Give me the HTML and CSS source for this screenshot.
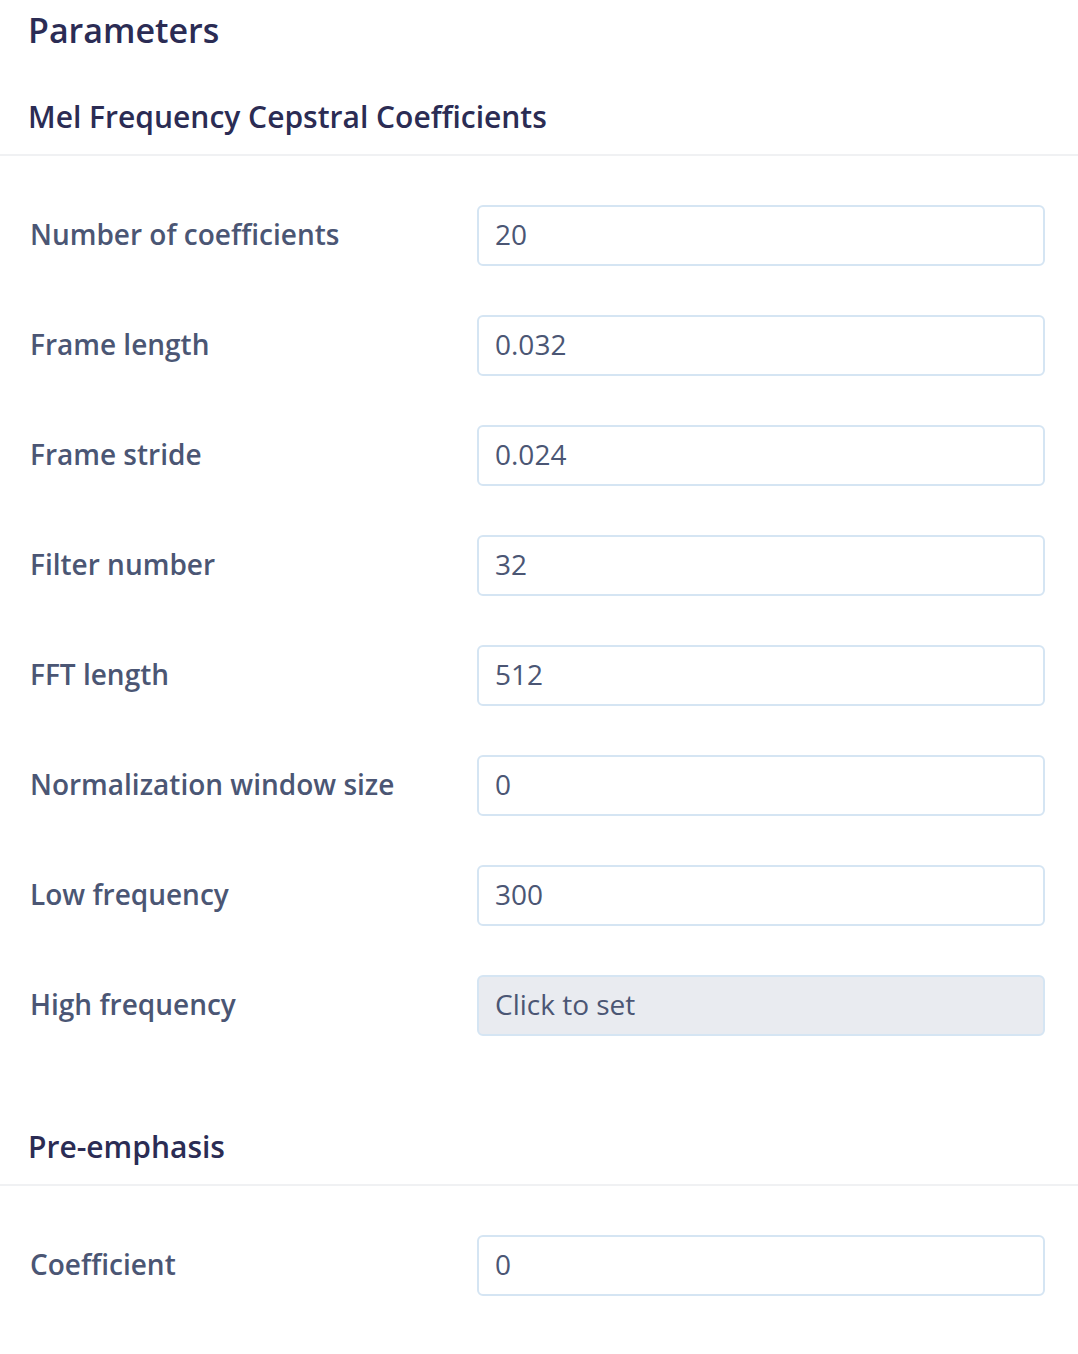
FILE: index.html
```html
<!DOCTYPE html>
<html lang="en">
<head>
<meta charset="utf-8">
<title>Parameters</title>
<link rel="stylesheet" href="styles.css">
</head>
<body>
<main class="page">
  <h1 class="title">Parameters</h1>

  <section class="group">
    <h2 class="group-title">Mel Frequency Cepstral Coefficients</h2>
    <div class="fields">
      <label class="row"><span class="label">Number of coefficients</span><input class="field" type="text" value="20"></label>
      <label class="row"><span class="label">Frame length</span><input class="field" type="text" value="0.032"></label>
      <label class="row"><span class="label">Frame stride</span><input class="field" type="text" value="0.024"></label>
      <label class="row"><span class="label">Filter number</span><input class="field" type="text" value="32"></label>
      <label class="row"><span class="label">FFT length</span><input class="field" type="text" value="512"></label>
      <label class="row"><span class="label">Normalization window size</span><input class="field" type="text" value="0"></label>
      <label class="row"><span class="label">Low frequency</span><input class="field" type="text" value="300"></label>
      <label class="row"><span class="label">High frequency</span><input class="field field-unset" type="text" value="Click to set" readonly></label>
    </div>
  </section>

  <section class="group">
    <h2 class="group-title">Pre-emphasis</h2>
    <div class="fields">
      <label class="row"><span class="label">Coefficient</span><input class="field" type="text" value="0"></label>
    </div>
  </section>
</main>
</body>
</html>
```

FILE: styles.css
```css
* { box-sizing: border-box; }

html, body {
  margin: 0;
  padding: 0;
  background: #ffffff;
}

body {
  font-family: "Open Sans", "Noto Sans", sans-serif;
  color: #2b2c54;
}

.page {
  width: 1078px;
}

.title {
  margin: 0;
  padding: 8px 0 0 28px;
  height: 72px;
  font-size: 34px;
  font-weight: 600;
  line-height: 44px;
  color: #2b2c54;
}

.group-title {
  margin: 0;
  padding: 0 0 0 28px;
  height: 84px;
  line-height: 90px;
  font-size: 30px;
  font-weight: 600;
  color: #2b2c54;
  border-bottom: 2px solid #f0f1f3;
}

.fields {
  display: flex;
  flex-direction: column;
  gap: 49px;
  padding: 49px 33px 66px 30px;
}

.group:last-child .fields {
  padding-bottom: 58px;
}

.row {
  display: grid;
  grid-template-columns: 447px 1fr;
  align-items: center;
  height: 61px;
}

.label {
  font-size: 28px;
  font-weight: 600;
  color: #4b5674;
  margin-top: -4px;
}

.field {
  width: 100%;
  height: 61px;
  border: 2px solid #d5e5f3;
  border-radius: 6px;
  background: #ffffff;
  padding: 0 15px 3px 16px;
  font-family: "Open Sans", "Noto Sans", sans-serif;
  font-size: 28px;
  font-weight: 400;
  color: #4b5674;
  outline: none;
}

.field-unset {
  background: #e9ebf0;
}
```
